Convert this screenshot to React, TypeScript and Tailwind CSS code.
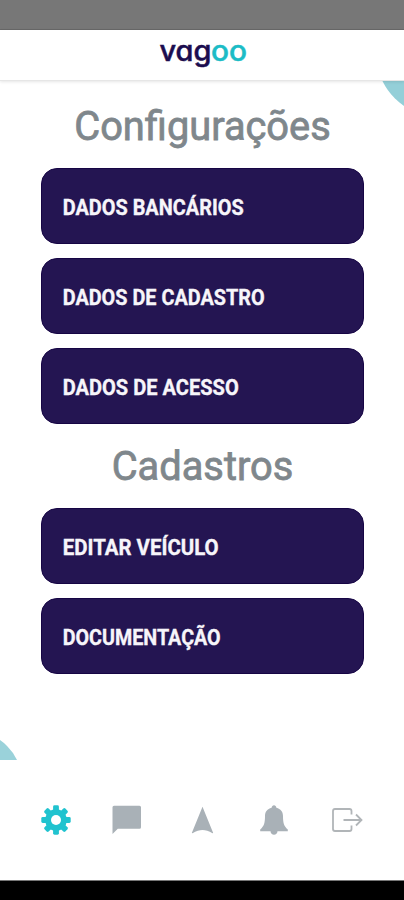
const settingsItems = [
    { label: "DADOS BANCÁRIOS", width: 181 },
    { label: "DADOS DE CADASTRO", width: 202 },
    { label: "DADOS DE ACESSO", width: 176 },
];

const registerItems = [
    { label: "EDITAR VEÍCULO", width: 156 },
    { label: "DOCUMENTAÇÃO", width: 158 },
];

function Logo() {
    return (
        <svg width="96" height="46" viewBox="0 0 96 46" className="overflow-visible font-['Inter'] font-medium" style={{ fontFeatureSettings: "'cv11'" }}>
            <text x="5.500" y="31.300" fontSize="28" textLength="52" lengthAdjust="spacingAndGlyphs" fill="#1c0d4f" stroke="#1c0d4f" strokeWidth="0.5">vag</text>
            <text x="57" y="31.300" fontSize="28" textLength="36" lengthAdjust="spacingAndGlyphs" fill="#1cbcc6" stroke="#1cbcc6" strokeWidth="0.5">oo</text>
        </svg>
    );
}

function MenuButton({ label, width }: { label: string; width: number }) {
    return (
        <button className="flex h-[76px] w-full items-center rounded-[16px] border border-[#160544] bg-[#241552] pl-[21px] pt-[3px]">
            <svg width={width + 4} height="32" className="overflow-visible font-['Roboto'] font-bold">
                <text x="-0.3" y="23" fontSize="22.5" textLength={width} lengthAdjust="spacingAndGlyphs" fill="#f7f5fa" stroke="#f7f5fa" strokeWidth="0.35">{label}</text>
            </svg>
        </button>
    );
}

function Title({ children }: { children: string }) {
    return <h1 className="pl-px text-center font-['Roboto',sans-serif] text-[39.8px] leading-[46px] font-normal text-[#7f878c] [-webkit-text-stroke:0.8px_#7f878c]">{children}</h1>;
}

function GearIcon() {
    return (
        <svg width="30" height="30" viewBox="-15 -15 30 30" fill="#20c3cf">
            {[0, 45, 90, 135].map((angle) => (
                <rect key={angle} x="-2.9" y="-14.7" width="5.8" height="29.4" rx="1.4" transform={`rotate(${angle})`} />
            ))}
            <circle r="10.8" />
            <circle r="5" fill="#fff" />
        </svg>
    );
}

function ChatIcon() {
    return (
        <svg width="30" height="30" viewBox="0 0 30 30" fill="#a9b1b7">
            <path d="M2 .8H27.500Q29 .8 29 2.300V22.300Q29 23.800 27.500 23.800H5.800L.5 29V2.300Q.5 .8 2 .8Z" />
        </svg>
    );
}

function NavigateIcon() {
    return (
        <svg width="30" height="30" viewBox="0 0 30 30" fill="#a9b1b7">
            <path d="M15.500 1.800L26.200 28L25.500 28.300Q20 25 15.500 25Q11 25 5.500 28.300L4.800 28Z" />
        </svg>
    );
}

function BellIcon() {
    return (
        <svg width="30" height="30" viewBox="0 0 30 30" fill="#a9b1b7">
            <path d="M15 0.300C16.300 .3 17.200 1.200 17.400 2.700C21.700 3.800 24 6.700 24 11C24 17.500 24.800 21 28.800 24.500V26.200H1.200V24.500C5.200 21 6 17.500 6 11C6 6.700 8.300 3.800 12.600 2.700C12.800 1.200 13.700 .3 15 .3Z" />
            <path d="M11.500 26H18.500C18.500 31 11.500 31 11.500 26Z" />
        </svg>
    );
}

function LogoutIcon() {
    return (
        <svg width="32" height="30" viewBox="0 0 32 30" fill="none" stroke="#b1b5b8" strokeWidth="1.8">
            <path d="M20.500 9.500V6Q20.500 4 18.500 4H4Q2 4 2 6V24Q2 26 4 26H18.500Q20.500 26 20.500 24V20.500" />
            <path d="M12.500 15H30.500M25 9.500L30.500 15L25 20.500" />
        </svg>
    );
}

export default function App() {
    return (
        <div className="flex h-[900px] w-[404px] flex-col overflow-hidden bg-white">
            <div className="h-[30px] shrink-0 border-b border-[#686868] bg-[#777]" />
            <header className="z-10 flex h-[51px] shrink-0 items-start justify-center border-b border-[#e6e6e6] shadow-[0_1px_3px_rgba(0,0,0,0.10)]">
                <Logo />
            </header>

            <main className="relative h-[679px] shrink-0 overflow-hidden px-[41px] pt-[23px]">
                <div className="absolute -top-[92px] left-[376px] size-[128px] rounded-full bg-[#94cfd8]" />
                <div className="absolute top-[650px] -left-[80px] size-[102px] rounded-full bg-[#9ad2da]" />
                <Title>Configurações</Title>
                <div className="mt-[18px] flex w-[323px] flex-col gap-[14px]">
                    {settingsItems.map((item) => (
                        <MenuButton key={item.label} {...item} />
                    ))}
                </div>
                <div className="mt-[20px] mb-[18px]">
                    <Title>Cadastros</Title>
                </div>
                <div className="flex w-[323px] flex-col gap-[14px]">
                    {registerItems.map((item) => (
                        <MenuButton key={item.label} {...item} />
                    ))}
                </div>
            </main>

            <nav className="flex h-[120px] shrink-0 items-center justify-between pr-[41px] pl-[40.5px]">
                <GearIcon />
                <ChatIcon />
                <div className="flex gap-[42.5px] pl-[2.5px]">
                    <NavigateIcon />
                    <BellIcon />
                </div>
                <LogoutIcon />
            </nav>
            <div className="grow border-t border-[#777] bg-black" />
        </div>
    );
}
